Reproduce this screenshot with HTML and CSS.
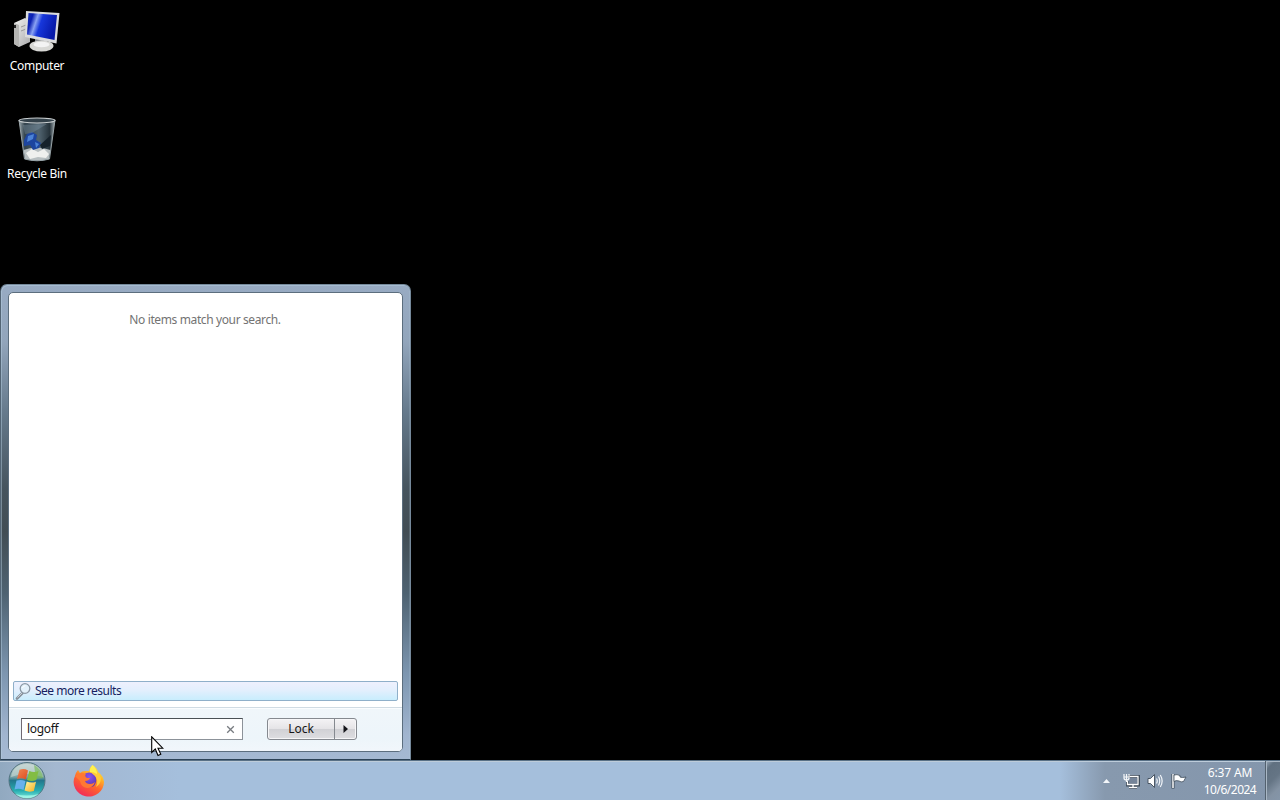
FILE: index.html
```html
<!DOCTYPE html>
<html lang="en">
<head>
<meta charset="utf-8">
<title>Desktop</title>
<link rel="stylesheet" href="styles.css">
</head>
<body>
<div class="screen">
  <main class="desktop">
    <div class="shortcut">
      <svg class="shortcut-icon" width="48" height="48" viewBox="0 0 48 48">
        <defs>
          <linearGradient id="screen" x1="0" y1="0" x2="1" y2=".3"><stop offset="0" stop-color="#1731b5"/><stop offset=".2" stop-color="#0b20b4"/><stop offset=".36" stop-color="#8aa2f2"/><stop offset=".52" stop-color="#1737dc"/><stop offset="1" stop-color="#0719a8"/></linearGradient>
          <linearGradient id="metal" x1="0" y1="0" x2="1" y2="1"><stop offset="0" stop-color="#f4f4f2"/><stop offset="1" stop-color="#a9aaac"/></linearGradient>
        </defs>
        <path d="M1 15 L12 10 L17 13 V34 L6 39 L1 36Z" fill="url(#metal)"/>
        <path d="M1 15 L6 17 V39 L1 36Z" fill="#b5b5b3"/>
        <path d="M8 19 L13 17 M8 23 L13 21" stroke="#999" stroke-width="1"/>
        <path d="M2 17 V20" stroke="#222" stroke-width="2"/>
        <path d="M22 30 L34 33 L35 38 H22Z" fill="#85888c"/>
        <ellipse cx="28.500" cy="38" rx="12" ry="5.500" fill="#d8d8d5"/>
        <ellipse cx="28.500" cy="36.500" rx="8" ry="2.800" fill="#f3f3f3"/>
        <path d="M13 3 L46.500 5 L43.500 35.500 L12 29Z" fill="#dadbdc"/>
        <path d="M15.500 5 L44 7 L41.500 32 L14 26.500Z" fill="url(#screen)"/>
      </svg>
      <span class="shortcut-label computer-label">Computer</span>
    </div>
    <div class="shortcut">
      <svg class="shortcut-icon" width="48" height="48" viewBox="0 0 48 48">
        <defs><linearGradient id="glass"><stop offset="0" stop-color="#9ba8ad"/><stop offset=".16" stop-color="#33434d"/><stop offset=".55" stop-color="#516470"/><stop offset=".85" stop-color="#26333b"/><stop offset="1" stop-color="#a6b0b4"/></linearGradient></defs>
        <path d="M6 4 Q24 1 42 4 L36.500 43 Q25 47 11.500 43Z" fill="url(#glass)"/>
        <path d="M10.500 34 Q23 29 37.500 34 L36 43 Q25 46 12 43Z" fill="#b8bfc1"/>
        <path d="M13 37 L19 33 L25 36 L31 33 L36 38 L33 42 L25 41 L17 43Z" fill="#eff0ee"/>
        <path d="M14 18 L19 16 L24 19 L23 24 L28 27 L26 32 L20 34 L17 29 L11 30 L11 24Z" fill="#1d459f"/>
        <path d="M15 20 L21 18 L20 23 L14 26 M22 26 L26 28 L23 32Z" fill="#4c83d7"/>
        <path d="M27 29 L38 19 L37 30 L29 33Z" fill="#15212a"/>
        <path d="M6 4 L11.500 43 Q24 46.500 36.500 43 L42 4" fill="none" stroke="#98a3a7"/>
        <ellipse cx="24" cy="4.500" rx="18" ry="2.500" fill="#33414a" stroke="#c9ced0" stroke-width="1.200"/>
        <path d="M10 9 L34 8 L19 17 L12 18Z" fill="#8fa5b5" opacity=".3"/>
      </svg>
      <span class="shortcut-label bin-label">Recycle Bin</span>
    </div>

    <section class="start-menu">
      <div class="menu-panel">
        <div class="results"><p class="empty">No items match your search.</p></div>
        <div class="more-row">
          <svg width="18" height="18" viewBox="0 0 18 18"><path d="M7.500 11 L2 16.500" stroke="#87909a" stroke-width="2.600" stroke-linecap="round"/><path d="M7.500 10.500 L2.500 15.500" stroke="#dce3ea" stroke-width=".8"/><circle cx="10" cy="6.500" r="4.800" fill="#e3f1fb" stroke="#8c99a6" stroke-width="1.300"/><path d="M7.500 6 Q8 4 10.500 3.700" fill="none" stroke="#fff"/></svg>
          <span class="more-label">See more results</span>
        </div>
        <footer class="menu-footer">
          <div class="search-box"><span class="query">logoff</span><svg width="9" height="9" viewBox="0 0 9 9"><path d="M1.200 1.200 L7.800 7.800 M7.800 1.200 L1.200 7.800" stroke="#777b80" stroke-width="1.300"/></svg></div>
          <div class="lock-button"><span class="lock">Lock</span><span class="lock-arrow"><svg width="5" height="8" viewBox="0 0 5 8"><path d="M.5 0 L5 4 L.5 8Z" fill="#15151a"/></svg></span></div>
        </footer>
      </div>
    </section>
  </main>

  <footer class="taskbar">
    <svg class="start-orb" width="40" height="39" viewBox="0 0 40 39">
      <defs>
        <linearGradient id="orb" x1="0" y1="0" x2="0" y2="1"><stop offset="0" stop-color="#b6c8c8"/><stop offset=".4" stop-color="#7ca3a6"/><stop offset=".5" stop-color="#23778c"/><stop offset=".78" stop-color="#27adb1"/><stop offset="1" stop-color="#7cebdc"/></linearGradient>
        <linearGradient id="flag-red" x1="0" y1="0" x2="1" y2="1"><stop offset="0" stop-color="#ef8752"/><stop offset="1" stop-color="#df4b20"/></linearGradient>
        <linearGradient id="flag-yellow" x1="0" y1="0" x2="1" y2="1"><stop offset="0" stop-color="#fff4a0"/><stop offset="1" stop-color="#f3af24"/></linearGradient>
      </defs>
      <circle cx="20" cy="19.500" r="18" fill="url(#orb)" stroke="#547682" stroke-width="1"/>
      <path d="M4 16 Q6 3 20 3 Q34 3 36 16 Q20 10 4 16Z" fill="#e4efe6" opacity=".45"/>
      <path d="M27 4 Q35 8 36 17 L29 18Z" fill="#75b956" opacity=".65"/>
      <path d="M12.500 8.800 Q17 7 21 9.500 L18.800 18.500 Q14.500 16.500 10 18Z" fill="url(#flag-red)"/>
      <path d="M22.300 10 Q27 12 31.500 10 L29.300 19 Q24.500 21 20 19Z" fill="#82bd42"/>
      <path d="M9.500 19.600 Q14 18 18.500 20 L16.500 29 Q12 27 7.500 28.500Z" fill="#68b1ed"/>
      <path d="M19.700 20.500 Q24.500 22.500 29 20.700 L26.800 30 Q21.500 31.500 17.500 29.500Z" fill="url(#flag-yellow)"/>
      <path d="M8 33 Q20 42 32 33 Q20 36 8 33Z" fill="#b2fff0" opacity=".7"/>
    </svg>
    <svg class="firefox" width="34" height="34" viewBox="0 0 34 34">
      <defs>
        <linearGradient id="fox" x1=".8" y1="0" x2=".25" y2="1"><stop offset="0" stop-color="#fff44f"/><stop offset=".3" stop-color="#ffb526"/><stop offset=".58" stop-color="#ff652c"/><stop offset="1" stop-color="#f0265e"/></linearGradient>
        <radialGradient id="globe" cx=".5" cy=".3" r=".7"><stop offset="0" stop-color="#8c54ed"/><stop offset="1" stop-color="#5636b0"/></radialGradient>
      </defs>
      <path d="M20.500 1 Q25 4 26 8 Q31.500 12 32 18 A15.200 14.500 0 1 1 3 12 Q4 8 6 6 L8 9 Q10 7 13 7 L17 7 Q18 3 20.500 1Z" fill="url(#fox)"/>
      <path d="M11 11 Q17 6 23 11 Q26 17 22 22 Q17 25 12 21 Q9 17 11 11Z" fill="url(#globe)"/>
      <path d="M3 12 Q8 7 14 10 Q12 12 15 14 L18 14 Q17 17 13 17 Q14 20 18 20 Q21 20 23 18 Q21 24 15 24 Q9 23 8 17Z" fill="#ff7833"/>
      <path d="M20 2 Q17 8 23 12 Q27 17 24 23 Q29 20 29 14 Q27 8 21 6Z" fill="#ffca3b"/>
      <path d="M20.500 1 Q17 5 18 8 Q22 8 25 10 Q25 5 20.500 1Z" fill="#fff14d"/>
    </svg>
    <div class="tray">
      <svg class="chevron" width="7" height="4" viewBox="0 0 7 4"><path d="M0 4 L3.500 0 L7 4Z" fill="#f3f6fa"/></svg>
      <svg class="network" width="17" height="16" viewBox="0 0 17 16"><path d="M5 3.500 H15.500 V12 H4.500 V8 M10 12 V14 M6 14.500 H14" fill="none" stroke="#384553" stroke-width="2.800"/><path d="M6.500 3.500 H15 V11.500 H4.500 V8 M10 12 V14 M6 14.500 H14" fill="none" stroke="#fff" stroke-width="1.300"/><path d="M7 5 H14 V10 H6 V8Z" fill="#758499"/><path d="M1 1 V5 Q1 7 3.500 7 Q6 7 6 5 V1 M3.500 1 V9 M1 4 H6" fill="none" stroke="#f5f7f9" stroke-width="1.200"/></svg>
      <svg class="volume" width="16" height="16" viewBox="0 0 16 16"><path d="M1 5.500 H3.500 L7.500 1.500 V14.500 L3.500 10.500 H1Z" fill="#fff" stroke="#3e4b59" stroke-width=".9"/><path d="M9.500 5.500 Q11 8 9.500 10.500 M11.500 3.500 Q14 8 11.500 12.500 M13.300 2 Q17 8 13.300 14" fill="none" stroke="#f3f6fa" stroke-width="1.200"/></svg>
      <svg class="action-flag" width="16" height="16" viewBox="0 0 16 16"><path d="M2 1 V15.500" stroke="#394653" stroke-width="3"/><path d="M2 1 V15" stroke="#fff" stroke-width="1.500"/><path d="M3 2 Q6 1 9 2.500 V4 Q11 5 15 4 L12.500 8.500 Q10 9.500 8 8 Q5 7 3 8.500Z" fill="#fff" stroke="#3e4b59" stroke-width=".8"/></svg>
      <div class="clock"><span class="time">6:37 AM</span><span class="date">10/6/2024</span></div>
      <span class="show-desktop"></span>
    </div>
  </footer>
  <svg class="pointer" width="13" height="21" viewBox="0 0 13 21"><path d="M.7 .8 V16.500 L4.300 13 L7 19.500 L9.800 18.300 L7 12.200 H11.800Z" fill="#fff" stroke="#000" stroke-width="1.100"/></svg>
</div>
</body>
</html>
```
FILE: styles.css
```css
* { box-sizing: border-box; }
body { margin: 0; background: #000; font: 12px/16px "Noto Sans", "Open Sans", sans-serif; }
svg { display: block; flex: none; }
.screen { position: relative; width: 1280px; height: 800px; display: flex; flex-direction: column; overflow: hidden; background: #000; }
.desktop { height: 760px; padding-top: 8px; display: flex; flex-direction: column; }
.shortcut { width: 74px; height: 108px; flex: none; display: flex; flex-direction: column; align-items: center; gap: 2px; color: #fff; }
.shortcut-label { white-space: nowrap; letter-spacing: -.3px; }
.start-menu { position: absolute; left: 0; top: 284px; width: 411px; height: 476px; padding: 7px; border: 1px solid #75899b; border-bottom-color: #2c4256; border-left-color: #536575; border-radius: 7px 7px 0 0; background: linear-gradient(#98abc3 0, #92a5bb 12%, #65798b 27%, #46545e 43%, #424d54 52%, #4e6271 65%, #7d96b0 82%, #a1b5cf 95%, #a5b9d2 100%); box-shadow: inset 1px 1px rgba(184, 209, 226, .45), inset -1px 0 rgba(184, 209, 226, .2); }
.menu-panel { height: 460px; border: 1px solid #5c6e7e; border-radius: 5px; background: #fff; display: flex; flex-direction: column; overflow: hidden; }
.results { height: 388px; flex: none; padding: 19px 1px 0 0; text-align: center; color: #737373; }
.empty { margin: 0; letter-spacing: -.38px; }
.more-row { height: 20px; flex: none; margin: 0 4px; padding-left: 1px; display: flex; align-items: center; gap: 2px; color: #151f61; border: 1px solid #8fafc9; border-radius: 2px; background: linear-gradient(#eef0fd, #e2effd 48%, #c8edfd); }
.more-label { letter-spacing: -.5px; }
.menu-footer { flex: 1; margin-top: 6px; padding: 10px 12px; display: flex; align-items: flex-start; gap: 24px; border-top: 1px solid #d0dbe3; background: linear-gradient(#f0f6fa, #edf5fa 70%, #f1f6fb); box-shadow: inset 0 1px #fafcfe; }
.search-box { width: 222px; height: 22px; padding: 0 7px 0 5px; display: flex; align-items: center; justify-content: space-between; border: 1px solid #8c9299; border-top-color: #4a5055; border-left-color: #706972; background: #fff; color: #151515; }
.query { letter-spacing: -.3px; }
.lock-button { width: 90px; height: 22px; display: flex; border: 1px solid #85898f; border-radius: 3px; background: linear-gradient(#f4f3f5, #e5e4e7 48%, #d1d1d5 52%, #dedee1); box-shadow: inset 0 0 0 1px #f6f6f8; color: #161616; }
.lock { width: 66px; text-align: center; line-height: 20px; }
.lock-arrow { flex: 1; display: flex; align-items: center; justify-content: center; border-left: 1px solid #85898f; }
.taskbar { height: 40px; padding-left: 7px; display: flex; align-items: center; border-top: 1px solid #587086; background: linear-gradient(90deg, #91a9c0 0, #a4b8d0 55px, #a2b8d3 90px, #a5bfdc 180px, #a5bfdc 1060px, #8799ae 1105px, #8496ac); box-shadow: inset 0 1px #bdccda; }
.firefox { margin-left: 25px; }
.tray { margin-left: auto; height: 39px; display: flex; align-items: center; color: #fff; }
.chevron { margin-right: 13px; }
.network { margin-right: 7px; }
.volume { margin-right: 8px; }
.clock { width: 74px; margin-left: 4px; padding-left: 4px; display: flex; flex-direction: column; align-items: center; line-height: 17px; }
.time { letter-spacing: -.15px; }
.date { letter-spacing: -.5px; }
.show-desktop { width: 15px; height: 39px; border-left: 1px solid #53616e; background: linear-gradient(135deg, #98a8b8 0, #607080 18%, #657585 48%, #8392a3 75%, #8596a9); box-shadow: inset 1px 1px #a9b7c5; }
.pointer { position: absolute; left: 151px; top: 736px; }
```
